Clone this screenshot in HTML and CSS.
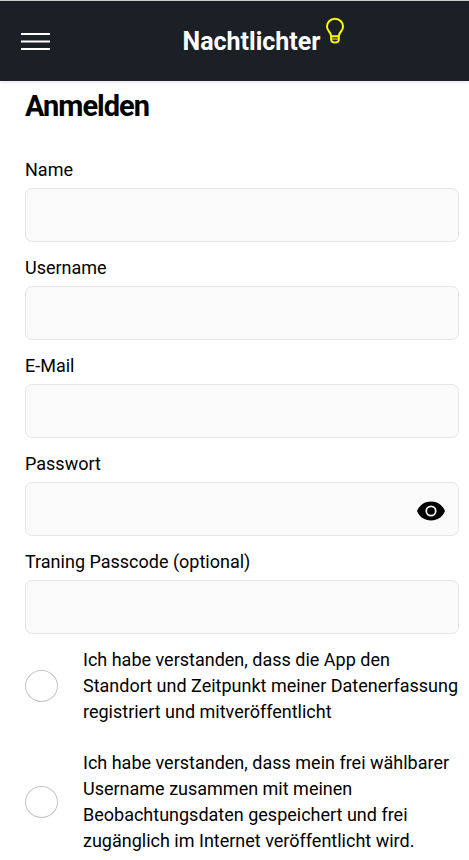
FILE: index.html
```html
<!DOCTYPE html>
<html lang="de">
<head>
<meta charset="utf-8">
<meta name="viewport" content="width=device-width, initial-scale=1">
<title>Nachtlichter</title>
<link rel="stylesheet" href="styles.css">
</head>
<body>
<header class="navbar">
  <button class="menu" type="button" aria-label="Menu">
    <svg width="29" height="18" viewBox="0 0 29 18" fill="#fff" aria-hidden="true"><path d="M0 0h29v2H0zM0 7.500h29v2H0zM0 15h29v2H0z"/></svg>
  </button>
  <div class="brand">
    <span>Nachtlichter</span>
    <svg class="bulb" width="20" height="28" viewBox="0 0 20 28" fill="none" stroke="#ff0" stroke-width="2" stroke-linejoin="round" aria-hidden="true">
      <path d="M6.200 19.200C6 16.800 5 15.500 3.700 14A7.800 7.800 0 0 1 2 9.500a8 7.700 0 0 1 16 0c0 1.800-.6 3.200-1.700 4.500-1.300 1.500-2.300 2.800-2.500 5.200z"/>
      <path d="M6.200 19v3.500c0 2 1.500 3 3.800 3s3.800-1 3.800-3V19"/>
      <path d="M7 22h6" stroke-width="1"/>
    </svg>
  </div>
</header>
<main class="page">
  <h1>Anmelden</h1>
  <form class="form">
    <div class="field"><label for="name">Name</label><input id="name" type="text"></div>
    <div class="field"><label for="username">Username</label><input id="username" type="text"></div>
    <div class="field"><label for="email">E-Mail</label><input id="email" type="email"></div>
    <div class="field">
      <label for="password">Passwort</label>
      <div class="password">
        <input id="password" type="password">
        <button class="reveal" type="button" aria-label="Passwort anzeigen">
          <svg width="28" height="20" viewBox="0 0 28 20" aria-hidden="true"><path d="M0 10C2.500 4 7.500.5 14 .5S25.500 4 28 10c-2.500 6-7.500 9.500-14 9.500S2.500 16 0 10z"/><circle cx="14" cy="10" r="4.700" stroke="#fafafa" stroke-width="1.700"/></svg>
        </button>
      </div>
    </div>
    <div class="field"><label for="passcode">Traning Passcode (optional)</label><input id="passcode" type="text"></div>
    <div class="consent">
      <input id="location" type="checkbox">
      <label for="location">Ich habe verstanden, dass die App den Standort und Zeitpunkt meiner Datenerfassung registriert und mitveröffentlicht</label>
    </div>
    <div class="consent">
      <input id="publish" type="checkbox">
      <label for="publish">Ich habe verstanden, dass mein frei wählbarer Username zusammen mit meinen Beobachtungsdaten gespeichert und frei zugänglich im Internet veröffentlicht wird.</label>
    </div>
  </form>
</main>
</body>
</html>
```
FILE: styles.css
```css
* { box-sizing: border-box; }
body {
  margin: 0;
  background: #fff;
  color: #000;
  font: 18px/26px Roboto, sans-serif;
}
button { padding: 0; border: 0; background: none; cursor: pointer; }
svg { display: block; }
.navbar {
  display: grid;
  grid-template-columns: 29px 1fr 29px;
  align-items: center;
  height: 81px;
  padding: 2px 21px 0;
  border-top: 1px solid #c5cec8;
  background: #1b1f26;
  box-shadow: 0 1px 4px rgba(0, 0, 0, .12);
}
.brand {
  display: flex;
  align-items: center;
  justify-content: center;
  gap: 5px;
  margin-left: 59px;
  color: #fff;
  font-size: 25px;
  font-weight: 700;
}
.bulb { margin-bottom: 22px; }
.page { padding: 8px 10px 8px 25px; }
h1 {
  margin: 0 0 34px;
  font-size: 29px;
  line-height: 34px;
  letter-spacing: -1px;
}
.form { display: flex; flex-direction: column; }
.field { display: flex; flex-direction: column; gap: 5px; margin-bottom: 13px; }
.field input {
  width: 100%;
  height: 54px;
  padding: 0 16px;
  border: 1px solid #e6e6e6;
  border-radius: 7px;
  background: #fafafa;
  font: inherit;
}
.password { position: relative; }
.password input { padding-right: 56px; }
.reveal { position: absolute; top: 19px; right: 14px; }
.consent {
  display: flex;
  align-items: center;
  gap: 25px;
  margin-bottom: 25px;
}
.consent input {
  flex: none;
  appearance: none;
  width: 33px;
  height: 32px;
  margin: 0;
  border: 1px solid #c4c4c4;
  border-radius: 50%;
}
```
